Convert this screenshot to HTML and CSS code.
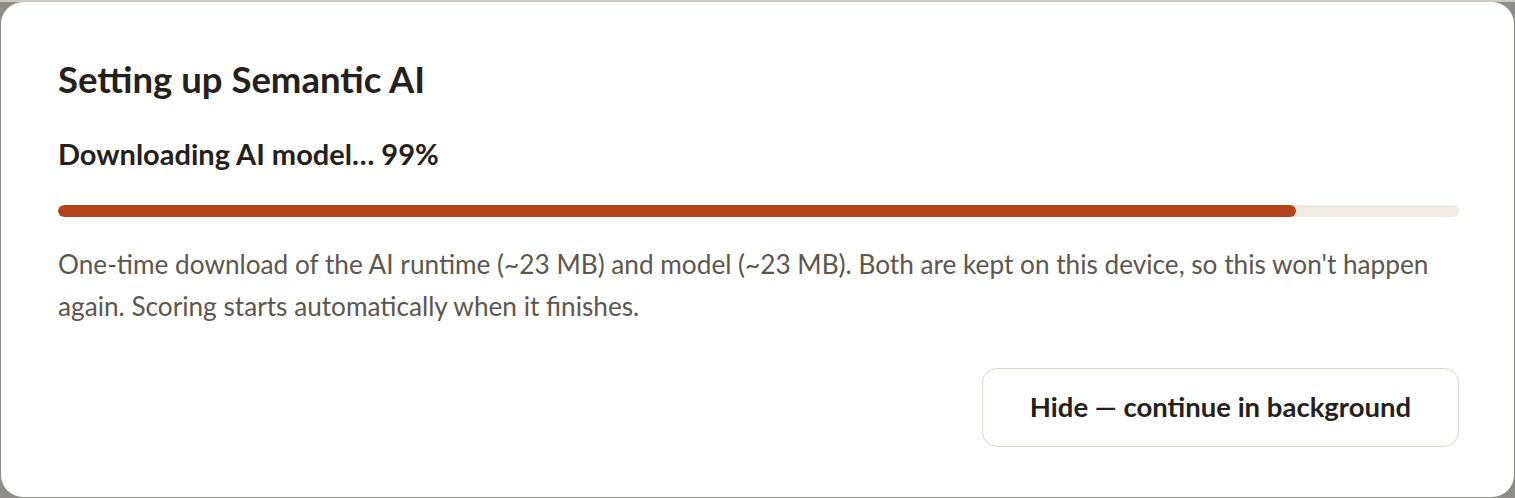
FILE: index.html
```html
<!DOCTYPE html>
<html lang="en">
<head>
<meta charset="utf-8">
<title>Setting up Semantic AI</title>
<link rel="stylesheet" href="styles.css">
</head>
<body>
<div class="modal">
  <h1 class="title">Setting up Semantic AI</h1>
  <p class="status">Downloading AI model… 99%</p>
  <div class="track"><div class="fill" style="width: 88.4%"></div></div>
  <p class="note">One-time download of the AI runtime (~23 MB) and model (~23 MB). Both are kept on this device, so this won't happen again. Scoring starts automatically when it finishes.</p>
  <div class="actions">
    <button class="btn">Hide — continue in background</button>
  </div>
</div>
</body>
</html>
```
FILE: styles.css
```css
html, body {
  margin: 0;
  padding: 0;
}
html {
  background: #8e8d8a;
}
body {
  width: 1515px;
  height: 498px;
  overflow: hidden;
  border-top: 2px solid #cdc8c0;
  box-sizing: border-box;
  background: #8e8d8a;
  font-family: Lato, "Liberation Sans", sans-serif;
}
.modal {
  margin: 0 1px;
  height: 495px;
  box-sizing: border-box;
  background: #fff;
  border-radius: 22px;
  padding: 57px 55px 0 57px;
  display: flex;
  flex-direction: column;
}
.title {
  margin: 0;
  font-size: 36.5px;
  line-height: 40px;
  font-weight: 700;
  color: #24211d;
}
.status {
  margin: 38px 0 0;
  font-size: 29px;
  line-height: 34px;
  font-weight: 700;
  color: #24211d;
}
.track {
  margin-top: 34px;
  height: 12px;
  border-radius: 6px;
  background: #f0ebe5;
  overflow: hidden;
}
.fill {
  height: 100%;
  border-radius: 6px;
  background: #b4431a;
}
.note {
  margin: 26px 0 0;
  font-size: 26.2px;
  line-height: 42px;
  color: #5c5650;
}
.actions {
  margin-top: 41px;
  display: flex;
  justify-content: flex-end;
}
.btn {
  width: 477px;
  height: 79px;
  box-sizing: border-box;
  border: 1.5px solid #ddd6cc;
  border-radius: 15px;
  background: #fff;
  padding-bottom: 4px;
  font-family: inherit;
  font-size: 27.5px;
  font-weight: 700;
  color: #24211d;
  cursor: pointer;
}
```
